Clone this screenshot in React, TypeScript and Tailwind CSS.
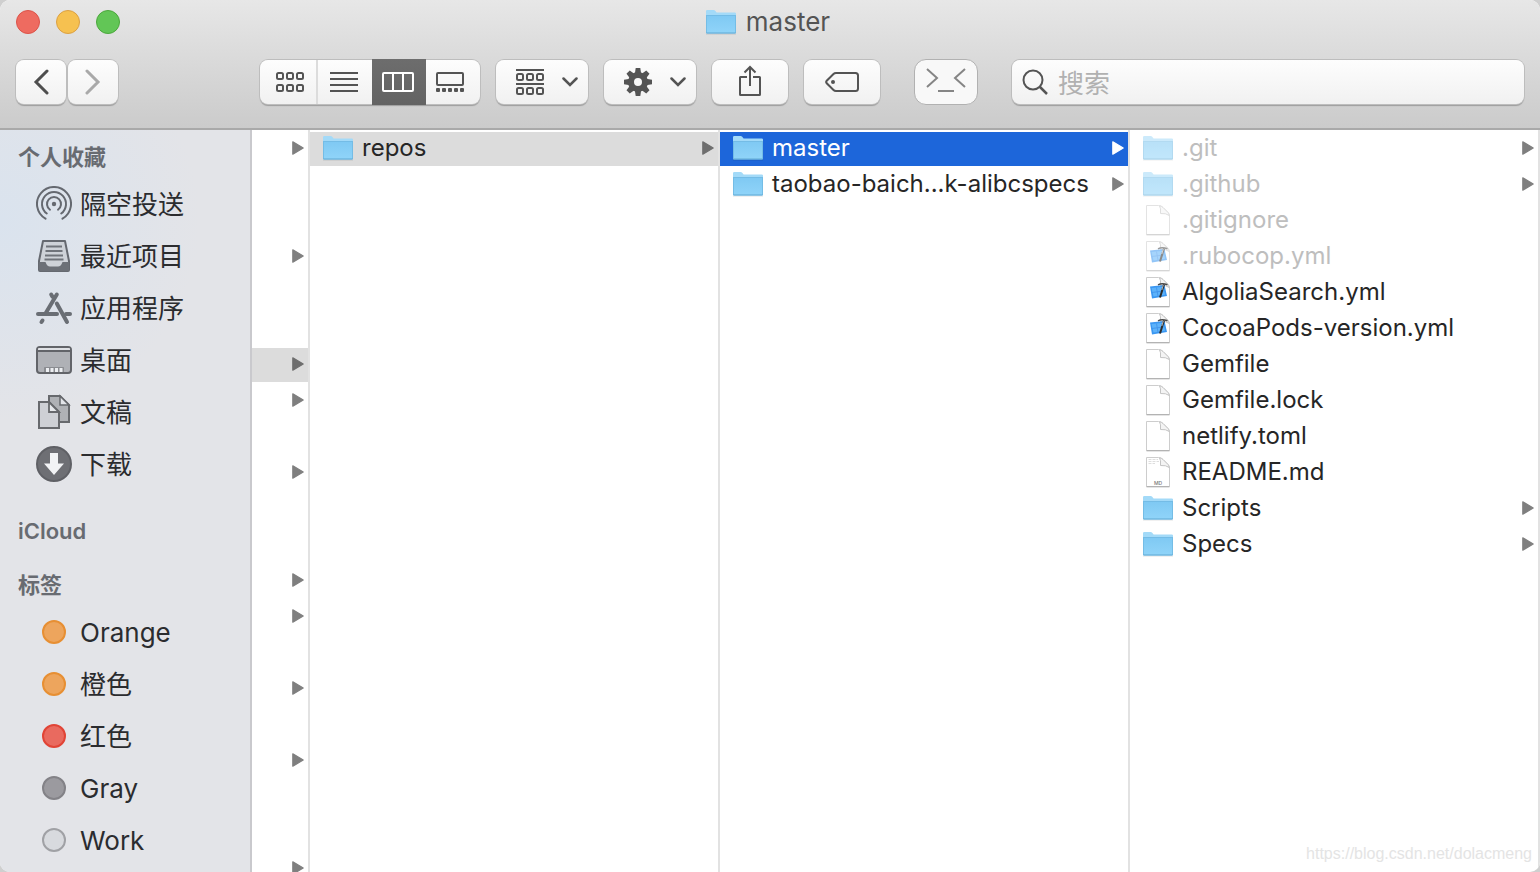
import { useId, useState, type ReactNode } from "react";
import clsx from "clsx";

type Kind = "folder" | "doc" | "xcode" | "md";

type Entry = {
	name: string;
	kind: Kind;
	dimmed?: boolean;
};

const repos: Entry[] = [
	{ name: "master", kind: "folder" },
	{ name: "taobao-baich...k-alibcspecs", kind: "folder" },
];

const files: Entry[] = [
	{ name: ".git", kind: "folder", dimmed: true },
	{ name: ".github", kind: "folder", dimmed: true },
	{ name: ".gitignore", kind: "doc", dimmed: true },
	{ name: ".rubocop.yml", kind: "xcode", dimmed: true },
	{ name: "AlgoliaSearch.yml", kind: "xcode" },
	{ name: "CocoaPods-version.yml", kind: "xcode" },
	{ name: "Gemfile", kind: "doc" },
	{ name: "Gemfile.lock", kind: "doc" },
	{ name: "netlify.toml", kind: "doc" },
	{ name: "README.md", kind: "md" },
	{ name: "Scripts", kind: "folder" },
	{ name: "Specs", kind: "folder" },
];

// The first column is scrolled so far that only its arrows are visible
const parentRows = Array.from({ length: 21 }, (_, i) => i);
const parentFolders = [0, 3, 6, 7, 9, 12, 13, 15, 17, 20];
const parentSelected = 6;

const tags = [
	{ name: "Orange", color: "bg-[#eda55d] border-[#e78f33]" },
	{ name: "橙色", color: "bg-[#eda55d] border-[#e78f33]" },
	{ name: "红色", color: "bg-[#e96a5f] border-[#e14436]" },
	{ name: "Gray", color: "bg-[#9b9a9f] border-[#838287]" },
	{ name: "Work", color: "bg-[#d8dade] border-[#a0a1a5]" },
];

/* ---------- Icons ---------- */

function FolderIcon() {
	const id = useId();
	return (
		<svg width="30" height="26" viewBox="0 0 30 26" className="shrink-0">
			<defs>
				<linearGradient id={id} x1="0" y1="0" x2="0" y2="1">
					<stop offset="0" stopColor="#7fc9f3" />
					<stop offset="1" stopColor="#90d4f9" />
				</linearGradient>
			</defs>
			<path d="M0 24.5h30v1H0z" fill="#000" opacity=".12" />
			<path
				d="M0 2.2Q0 1 1.2 1H7.6Q8.6 1 9.2 1.8L10.6 3.4H28.8Q30 3.4 30 4.6V24H0Z"
				fill="#a3daf8"
			/>
			<path d="M0 6.5H30V23.4Q30 24.5 28.9 24.5H1.1Q0 24.5 0 23.4Z" fill={`url(#${id})`} />
			<path d="M0 6.5H30" stroke="#74bce6" strokeWidth="1" />
			<path d="M.5 7V24M29.5 7V24" stroke="#74bde6" strokeWidth="1" />
			<path d="M.5 24H29.5" stroke="#5fa8d3" strokeWidth="1" />
		</svg>
	);
}

function DocIcon({ kind }: { kind: Kind }) {
	return (
		<svg width="30" height="32" viewBox="0 0 30 32" className="shrink-0">
			<path
				d="M3.500 1.500H15.500Q18 1.500 20 3.500L25 8.500Q26.500 10 26.500 12V30.500H3.500Z"
				fill="#fff"
				stroke="#cdcdcd"
			/>
			<path d="M3.500 30.800H26.500" stroke="#a9a9a9" />
			<path
				d="M16.500 1.800Q18 4 17.500 9.500Q23 9 26.300 11.500Q26 9.500 25 8.500L20 3.500Q18.500 2 16.500 1.800Z"
				fill="#f4f4f4"
				stroke="#c4c4c4"
			/>
			{kind === "xcode" && (
				<g>
					<path d="M7 10.500L21.500 9L24 20L9 22.500Z" fill="#3a97f2" />
					<path d="M8.500 12L20.500 10.800L22 18.800L10.500 20.500Z" fill="#5cb2fa" />
					<path d="M9 16.500L21.500 14.800M13.500 11.500L15 20.500" stroke="#3e90e8" strokeWidth=".8" />
					<path d="M15 8.800Q19 6.800 24.500 8.800" fill="none" stroke="#4a4a4a" strokeWidth="1.500" />
					<path d="M21 8.500L17 21.500" stroke="#2b2b2b" strokeWidth="2" />
					<path d="M20.300 9L18.800 14" stroke="#b5b5b5" strokeWidth="1" />
				</g>
			)}
			{kind === "md" && (
				<g>
					<path
						d="M5.500 3.500H15M5.500 5.500H16M5.500 7.500H12"
						stroke="#dedede"
						strokeWidth="1"
						strokeDasharray="3 1"
					/>
					<text x="15" y="28.500" textAnchor="middle" fontSize="5" fontWeight="500" fill="#777">
						MD
					</text>
				</g>
			)}
		</svg>
	);
}

function Arrow({ className }: { className?: string }) {
	return (
		<svg width="12" height="14" viewBox="0 0 12 14" className={clsx("shrink-0", className)}>
			<path
				d="M.8 .8L11.200 7L.8 13.200Z"
				fill="currentColor"
				stroke="currentColor"
				strokeWidth="1.200"
				strokeLinejoin="round"
			/>
		</svg>
	);
}

function Chevron() {
	return (
		<svg width="16" height="10" viewBox="0 0 16 10" fill="none">
			<path
				d="M1.500 1.500L8 8L14.500 1.500"
				stroke="#545454"
				strokeWidth="2.500"
				strokeLinecap="round"
			/>
		</svg>
	);
}

function AirDropIcon() {
	return (
		<svg width="36" height="36" viewBox="0 0 36 36" fill="none" stroke="#656970" strokeWidth="2">
			<circle cx="18" cy="18" r="2.200" fill="#656970" stroke="none" />
			<path d="M9.500 32.700A17 17 0 1 1 26.500 32.700" strokeLinecap="round" />
			<path d="M10.800 27.500A12 12 0 1 1 25.200 27.500" strokeLinecap="round" />
			<path d="M14 23.700A7 7 0 1 1 22 23.700" strokeLinecap="round" />
		</svg>
	);
}

function RecentsIcon() {
	return (
		<svg width="36" height="34" viewBox="0 0 36 34" fill="none">
			<path
				d="M7 2H29L33 22V31Q33 32 32 32H4Q3 32 3 31V22Z"
				fill="#ced2d8"
				stroke="#656970"
				strokeWidth="2"
				strokeLinejoin="round"
			/>
			<path d="M10 7.500H26M9.500 12H26.500M9 16.500H27M8.500 20.500H27.500" stroke="#70747b" strokeWidth="2" />
			<path d="M3 23H9.500Q11 27.500 14 27.500H22Q25 27.500 26.500 23H33V31Q33 32 32 32H4Q3 32 3 31Z" fill="#6c7077" />
		</svg>
	);
}

function AppsIcon() {
	return (
		<svg width="36" height="34" viewBox="0 0 36 34" fill="none" stroke="#6a6e74" strokeWidth="4" strokeLinecap="round">
			<path d="M20.800 3.500L9.800 22" />
			<path d="M6.500 29.500L5.500 31" />
			<path d="M15.200 3.500L16.500 5.700" />
			<path d="M20.800 12.500L31 31" />
			<path d="M2 23H21" />
			<path d="M30 23H34" />
		</svg>
	);
}

function DesktopIcon() {
	return (
		<svg width="36" height="28" viewBox="0 0 36 28" fill="none">
			<rect x="1" y="1" width="34" height="26" rx="3" fill="#afb1b6" stroke="#626469" strokeWidth="2" />
			<path d="M2 3Q2 2 3 2H33Q34 2 34 3V4H2Z" fill="#dfe1e5" />
			<path d="M2 5H34" stroke="#626469" strokeWidth="2" />
			<path d="M8.500 26V21.500H27.500V26" fill="#8a8c91" stroke="#8a8c91" />
			<path d="M10 22H13V26H10ZM14.500 22H17.500V26H14.500ZM19 22H22V26H19ZM23.500 22H26.500V26H23.500Z" fill="#eceef1" />
		</svg>
	);
}

function DocumentsIcon() {
	return (
		<svg width="36" height="36" viewBox="0 0 36 36" fill="none" stroke="#67696d" strokeWidth="2">
			<path d="M13 2H24L33 11V28H13Z" fill="#afb1b5" />
			<path d="M24 2V11H33Z" fill="#e3e5e9" strokeWidth="1.500" />
			<path d="M3 8H13L23 18V34H3Z" fill="#ced0d5" />
			<path d="M13 8V18H23Z" fill="#e6e8eb" strokeWidth="1.800" />
		</svg>
	);
}

function DownloadsIcon() {
	return (
		<svg width="36" height="36" viewBox="0 0 36 36">
			<circle cx="18" cy="18" r="17" fill="#6e6f74" stroke="#5f6065" strokeWidth="2" />
			<path d="M14 7H22V17.500H28L18 29L8 17.500H14Z" fill="#f2f3f5" />
		</svg>
	);
}

const favorites: { name: string; icon: ReactNode }[] = [
	{ name: "隔空投送", icon: <AirDropIcon /> },
	{ name: "最近项目", icon: <RecentsIcon /> },
	{ name: "应用程序", icon: <AppsIcon /> },
	{ name: "桌面", icon: <DesktopIcon /> },
	{ name: "文稿", icon: <DocumentsIcon /> },
	{ name: "下载", icon: <DownloadsIcon /> },
];

const viewModes = [
	{
		id: "icons",
		label: "Icon view",
		size: "w-[58px] border-r-2 border-[#dcdcdc] pl-1",
		icon: (
			<svg width="28" height="20" viewBox="0 0 28 20" fill="none" stroke="currentColor" strokeWidth="2">
				{[1, 13].map((y) =>
					[1, 11, 21].map((x) => (
						<rect key={`${x}-${y}`} x={x} y={y} width="6" height="6" rx="1.500" />
					))
				)}
			</svg>
		),
	},
	{
		id: "list",
		label: "List view",
		size: "w-[54px] pr-0.5",
		icon: (
			<svg width="28" height="22" viewBox="0 0 28 22" stroke="currentColor" strokeWidth="2">
				<path d="M0 2H28M0 8H28M0 14H28M0 20H28" />
			</svg>
		),
	},
	{
		id: "columns",
		label: "Column view",
		size: "w-[54px] pr-0.5",
		icon: (
			<svg width="32" height="20" viewBox="0 0 32 20" fill="none" stroke="currentColor" strokeWidth="2">
				<rect x="1" y="1" width="30" height="18" rx="1" />
				<path d="M11 1V19M21 1V19" />
			</svg>
		),
	},
	{
		id: "gallery",
		label: "Gallery view",
		size: "w-[54px] pr-1.5",
		icon: (
			<svg width="28" height="20" viewBox="0 0 28 20" fill="none">
				<rect x="1" y="1" width="26" height="12" rx="1" stroke="currentColor" strokeWidth="2" />
				{[0, 6, 12, 18, 24].map((x) => (
					<rect key={x} x={x} y="16" width="4" height="4" rx="1" fill="currentColor" />
				))}
			</svg>
		),
	},
];

/* ---------- Toolbar ---------- */

const control =
	"flex h-11 shrink-0 items-center rounded-lg bg-linear-to-b from-[#fdfdfd] to-[#f1f1f1] text-[#545454] shadow-[0_0_0_1px_#bdbdbd,0_2px_1px_#9d9d9d]";

function Toolbar() {
	const [view, setView] = useState("columns");
	const [query, setQuery] = useState("");

	return (
		<div className="flex items-center px-4 pt-[13px]">
			{/* Back / forward */}
			<div className="flex w-[244px] shrink-0 gap-0.5">
				<button aria-label="Back" className={clsx(control, "w-[50px] justify-center")}>
					<svg width="16" height="26" viewBox="0 0 16 26" fill="none">
						<path d="M14 2L3 13L14 24" stroke="#4e4e4e" strokeWidth="3" strokeLinecap="round" />
					</svg>
				</button>
				<button aria-label="Forward" className={clsx(control, "w-[50px] justify-center")}>
					<svg width="16" height="26" viewBox="0 0 16 26" fill="none">
						<path d="M2 2L13 13L2 24" stroke="#a9a9a9" strokeWidth="3" strokeLinecap="round" />
					</svg>
				</button>
			</div>

			{/* View switcher */}
			<div className={control}>
				{viewModes.map((mode) => (
					<button
						key={mode.id}
						aria-label={mode.label}
						aria-pressed={view === mode.id}
						onClick={() => setView(mode.id)}
						className={clsx(
							"flex items-center justify-center",
							mode.size,
							view === mode.id ? "h-[46px] bg-linear-to-b from-[#6d6d6d] to-[#636363] text-white" : "h-11"
						)}
					>
						{mode.icon}
					</button>
				))}
			</div>

			<button aria-label="Group items" className={clsx(control, "ml-4 w-[92px] justify-between pr-[10px] pl-5")}>
				<svg width="28" height="26" viewBox="0 0 28 26" fill="none" stroke="currentColor" strokeWidth="2">
					<path d="M0 1H28M0 15H28" />
					{[5, 19].map((y) =>
						[1, 11, 21].map((x) => (
							<rect key={`${x}-${y}`} x={x} y={y} width="6" height="6" rx="1.500" />
						))
					)}
				</svg>
				<Chevron />
			</button>

			<button aria-label="Actions" className={clsx(control, "ml-4 w-[92px] justify-between pr-[10px] pl-5")}>
				<svg width="28" height="28" viewBox="-14 -14 28 28" fill="currentColor">
					{[0, 45, 90, 135, 180, 225, 270, 315].map((deg) => (
						<path key={deg} d="M-3.200 -8L-2.300 -14H2.300L3.200 -8Z" transform={`rotate(${deg})`} />
					))}
					<circle r="7" fill="none" stroke="currentColor" strokeWidth="6" />
				</svg>
				<Chevron />
			</button>

			<button aria-label="Share" className={clsx(control, "ml-4 w-[76px] justify-center pb-0.5")}>
				<svg width="24" height="32" viewBox="0 0 24 32" fill="none" stroke="currentColor" strokeWidth="2">
					<path d="M9 12H2.500Q2 12 2 12.500V29.500Q2 30 2.500 30H21.500Q22 30 22 29.500V12.500Q22 12 21.500 12H15" />
					<path d="M12 21V2M6.500 7.500L12 2L17.500 7.500" />
				</svg>
			</button>

			<button aria-label="Tags" className={clsx(control, "ml-4 w-[76px] justify-center")}>
				<svg width="34" height="20" viewBox="0 0 34 20" fill="none">
					<path
						d="M11 1H30.500Q33 1 33 3.500V16.500Q33 19 30.500 19H11Q9.500 19 8.500 18L1.500 11Q.8 10 1.500 9L8.500 2Q9.500 1 11 1Z"
						stroke="currentColor"
						strokeWidth="2"
					/>
					<circle cx="8" cy="10" r="2" fill="currentColor" />
				</svg>
			</button>

			<button
				aria-label="Open in Terminal"
				className="ml-[34px] flex h-[46px] w-[64px] shrink-0 items-center justify-center rounded-xl border border-[#b1b1b1] bg-[#f8f8f8] pb-0.5"
			>
				<svg width="40" height="30" viewBox="0 0 40 30" fill="none" stroke="#858585" strokeWidth="2">
					<path d="M1 3L11 12L1 21M39 3L29 12L39 21M12 25H28" />
				</svg>
			</button>

			<label className={clsx(control, "ml-[34px] min-w-0 flex-1 gap-[10px] px-[10px]")}>
				<svg width="26" height="26" viewBox="0 0 26 26" fill="none" stroke="#545454" strokeWidth="2">
					<circle cx="11" cy="11" r="9.500" />
					<path d="M17.500 17.500L25 25" strokeWidth="2.500" />
				</svg>
				<input
					aria-label="Search"
					value={query}
					onChange={(e) => setQuery(e.target.value)}
					placeholder="搜索"
					className="h-11 min-w-0 flex-1 bg-transparent pt-0.5 text-[26px] leading-10 text-[#333] outline-none placeholder:text-[#b1b1b1]"
				/>
			</label>
		</div>
	);
}

/* ---------- Sidebar ---------- */

function Section({ title, children }: { title: string; children?: ReactNode }) {
	return (
		<section>
			<h2 className="pl-[18px] text-[22px] leading-7 font-semibold text-[#686b71]">{title}</h2>
			{children && <ul className="mt-2">{children}</ul>}
		</section>
	);
}

function SidebarItem({ name, icon }: { name: string; icon: ReactNode }) {
	return (
		<li>
			<button className="flex h-[52px] w-full items-center gap-2 pl-9 text-left text-[26px] leading-8 text-[#2b2c2f]">
				<span className="flex w-9 shrink-0 justify-center pb-0.5">{icon}</span>
				<span>{name}</span>
			</button>
		</li>
	);
}

/* ---------- Columns ---------- */

function FileRow({ entry, selected }: { entry: Entry; selected?: "active" | "path" }) {
	return (
		<li>
			<button
				className={clsx(
					"flex h-[34px] w-full items-center gap-[9px] pr-1 pb-0.5 pl-[13px] text-left text-2xl leading-8",
					selected === "active" && "bg-[#1d66da] text-white",
					selected === "path" && "bg-[#dcdcdc] text-[#262626]",
					!selected && (entry.dimmed ? "text-[#bebebe]" : "text-[#262626]")
				)}
			>
				<span className={clsx("flex shrink-0", entry.dimmed && "opacity-55")}>
					{entry.kind === "folder" ? <FolderIcon /> : <DocIcon kind={entry.kind} />}
				</span>
				<span className="min-w-0 flex-1 whitespace-nowrap">{entry.name}</span>
				{entry.kind === "folder" && (
					<Arrow
						className={
							selected === "active"
								? "text-white"
								: selected === "path"
									? "text-[#6e6e6e]"
									: "text-[#7f7f7f]"
						}
					/>
				)}
			</button>
		</li>
	);
}

const column = "flex flex-col gap-0.5 overflow-hidden border-r-2 border-[#e2e2e2] pt-0.5";

export default function App() {
	return (
		<div className="h-screen bg-[#cfcfcf] font-[Inter,'Noto_Sans_CJK_SC',sans-serif]">
			<div className="relative flex h-full flex-col overflow-hidden rounded-[10px] bg-white">
				{/* Title bar */}
				<header className="h-[130px] shrink-0 border-b-2 border-[#a9a9a9] bg-linear-to-b from-[#e7e7e7] to-[#cbcbcb]">
					<div className="grid h-[46px] grid-cols-[1fr_auto_1fr] items-center px-4 pb-0.5">
						<div className="flex gap-4">
							<button aria-label="Close" className="size-6 rounded-full border border-[#dc5349] bg-[#ee6b60]" />
							<button aria-label="Minimize" className="size-6 rounded-full border border-[#dba043] bg-[#f6c150]" />
							<button aria-label="Zoom" className="size-6 rounded-full border border-[#4ba73c] bg-[#62c656]" />
						</div>
						<h1 className="flex items-center gap-2.5 pr-1 text-[26px] leading-8 text-[#545454]">
							<FolderIcon />
							master
						</h1>
					</div>
					<Toolbar />
				</header>

				<div className="flex min-h-0 flex-1">
					{/* Sidebar */}
					<nav className="flex w-[252px] shrink-0 flex-col gap-[26px] overflow-hidden border-r-2 border-[#c9c9cd] bg-[#e3e4e8] bg-[radial-gradient(circle_at_0_90px,#dae3ee,#e3e4e8_200px)] pt-[13px]">
						<Section title="个人收藏">
							{favorites.map((item) => (
								<SidebarItem key={item.name} name={item.name} icon={item.icon} />
							))}
						</Section>
						<Section title="iCloud" />
						<Section title="标签">
							{tags.map((tag) => (
								<SidebarItem
									key={tag.name}
									name={tag.name}
									icon={<span className={clsx("size-6 rounded-full border-2", tag.color)} />}
								/>
							))}
						</Section>
					</nav>

					{/* Columns */}
					<main className="flex min-w-0 flex-1">
						<ul className={clsx(column, "w-[58px] shrink-0")}>
							{parentRows.map((row) => (
								<li
									key={row}
									className={clsx(
										"flex h-[34px] shrink-0 items-center justify-end pr-1 pb-0.5",
										row === parentSelected ? "bg-[#dcdcdc] text-[#6e6e6e]" : "text-[#7f7f7f]"
									)}
								>
									{parentFolders.includes(row) && <Arrow />}
								</li>
							))}
						</ul>
						<ul className={clsx(column, "w-[410px] shrink-0")}>
							<FileRow entry={{ name: "repos", kind: "folder" }} selected="path" />
						</ul>
						<ul className={clsx(column, "w-[410px] shrink-0")}>
							{repos.map((entry) => (
								<FileRow
									key={entry.name}
									entry={entry}
									selected={entry.name === "master" ? "active" : undefined}
								/>
							))}
						</ul>
						<ul className={clsx(column, "min-w-0 flex-1")}>
							{files.map((entry) => (
								<FileRow key={entry.name} entry={entry} />
							))}
						</ul>
					</main>
				</div>

				<p className="absolute right-2 bottom-2 font-['Liberation_Sans',Arial,sans-serif] text-base leading-5 text-[#e4e4e4]">
					https://blog.csdn.net/dolacmeng
				</p>
			</div>
		</div>
	);
}
